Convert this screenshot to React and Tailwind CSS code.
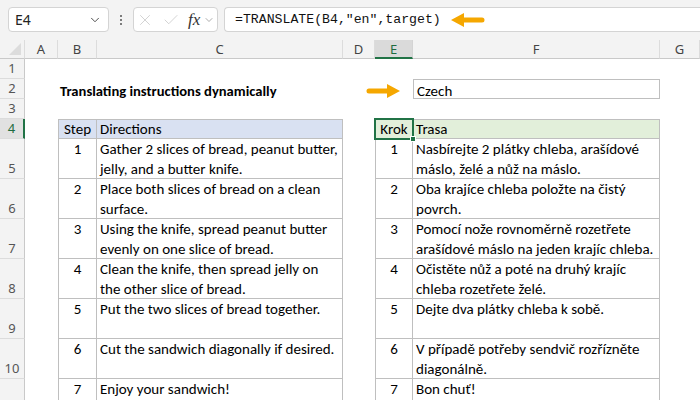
import { ChevronDown, X, Check } from 'lucide-react'

const cellFont = { fontFamily: 'Carlito, Calibri, Lato, sans-serif' }

const left = [
  ['Gather 2 slices of bread, peanut butter,', 'jelly, and a butter knife.'],
  ['Place both slices of bread on a clean', 'surface.'],
  ['Using the knife, spread peanut butter', 'evenly on one slice of bread.'],
  ['Clean the knife, then spread jelly on', 'the other slice of bread.'],
  ['Put the two slices of bread together.'],
  ['Cut the sandwich diagonally if desired.'],
  ['Enjoy your sandwich!'],
]

const right = [
  ['Nasbírejte 2 plátky chleba, arašídové', 'máslo, želé a nůž na máslo.'],
  ['Oba krajíce chleba položte na čistý', 'povrch.'],
  ['Pomocí nože rovnoměrně rozetřete', 'arašídové máslo na jeden krajíc chleba.'],
  ['Očistěte nůž a poté na druhý krajíc', 'chleba rozetřete želé.'],
  ['Dejte dva plátky chleba k sobě.'],
  ['V případě potřeby sendvič rozřízněte', 'diagonálně.'],
  ['Bon chuť!'],
]

function Arrow({ dir }) {
  return (
    <svg width="34" height="14" viewBox="0 0 34 14" className={dir === 'left' ? '' : 'rotate-180'}>
      <path d="M0 7 L13 0 L13 4.5 L31 4.5 Q33.5 4.5 33.5 7 Q33.5 9.5 31 9.5 L13 9.5 L13 14 Z" fill="#f5a700" />
    </svg>
  )
}

function RowHead({ n, active }) {
  return (
    <div
      className={`flex items-end justify-center text-[13px] leading-[19px] border-b border-[#dcdcdc] ${
        active ? 'bg-[#e1e1e1] text-[#1e6c41] border-r-2 border-r-[#217346]' : 'bg-[#f3f3f3] text-[#555] border-r border-r-[#c9c9c9]'
      }`}
      style={{ fontFamily: '"Noto Sans", sans-serif' }}
    >
      {n}
    </div>
  )
}

function Lines({ lines }) {
  return (
    <div className="flex flex-col leading-[20px]">
      {lines.map((l) => (
        <span key={l} className="whitespace-nowrap">{l}</span>
      ))}
    </div>
  )
}

export default function App() {
  const colLetters = ['A', 'B', 'C', 'D', 'E', 'F', 'G']
  return (
    <div className="w-[700px] h-[400px] overflow-hidden bg-white relative">
      {/* formula bar */}
      <div className="h-[40px] bg-[#f3f3f3] flex items-start pt-[7px] pl-[8px] gap-[6px]" style={{ fontFamily: '"Noto Sans", sans-serif' }}>
        <div className="w-[101px] h-[25px] bg-white border border-[#d4d4d4] rounded-[4px] flex items-center justify-between pl-[6px] pr-[6px] text-[14px] text-[#222]">
          <span>E4</span>
          <ChevronDown size={14} strokeWidth={1.6} color="#444" />
        </div>
        <div className="w-[12px] h-[25px] flex flex-col items-center justify-center gap-[2px]">
          <span className="w-[2px] h-[2px] bg-[#555] rounded-full" />
          <span className="w-[2px] h-[2px] bg-[#555] rounded-full" />
          <span className="w-[2px] h-[2px] bg-[#555] rounded-full" />
        </div>
        <div className="w-[85px] h-[25px] bg-white border border-[#d4d4d4] rounded-[4px] flex items-center pl-[2px] gap-[8px]">
          <X size={18} strokeWidth={1} color="#c4c4c4" />
          <Check size={18} strokeWidth={1} color="#c4c4c4" />
          <span className="italic text-[17px] text-[#333] leading-none" style={{ fontFamily: '"Liberation Serif", serif' }}>fx</span>
          <ChevronDown size={12} strokeWidth={1.4} color="#888" className="-ml-[5px]" />
        </div>
        <div className="flex-1 h-[25px] bg-white border border-[#d4d4d4] border-r-0 rounded-l-[4px] flex items-center pl-[10px] gap-[10px]">
          <span className="text-[13.2px] text-[#111]" style={{ fontFamily: '"Liberation Mono", monospace' }}>
            =TRANSLATE(B4,"en",target)
          </span>
          <Arrow dir="left" />
        </div>
      </div>

      {/* sheet */}
      <div
        className="grid grid-cols-[25px_33px_39px_246px_32px_38px_247px_40px] grid-rows-[19px_20px_20px_20px_20px_40px_40px_40px_40px_40px_40px_40px] text-[15px] leading-[20px] text-black"
        style={cellFont}
      >
        {/* column header row */}
        <div className="bg-[#f3f3f3] border-b border-[#c9c9c9] border-r border-r-[#dcdcdc] relative">
          <div className="absolute right-[3px] bottom-[3px] w-0 h-0 border-l-[12px] border-l-transparent border-b-[12px] border-b-[#dcdcdc]" />
        </div>
        {colLetters.map((l) => (
          <div
            key={l}
            className={`flex items-center justify-center text-[13px] ${
              l === 'E'
                ? 'bg-[#dadada] text-[#1e6c41] border-b-2 border-b-[#217346] border-r border-r-[#d4d4d4]'
                : 'bg-[#f3f3f3] text-[#444] border-b border-b-[#c9c9c9] border-r border-r-[#dcdcdc]'
            }`}
            style={{ fontFamily: '"Noto Sans", sans-serif' }}
          >
            {l}
          </div>
        ))}

        {/* row 1 */}
        <RowHead n={1} />
        <div className="col-span-7" />

        {/* row 2 */}
        <RowHead n={2} />
        <div />
        <div className="col-span-2 pt-[2px] pl-[2px] font-bold text-[14.6px] whitespace-nowrap">
          Translating instructions dynamically
        </div>
        <div className="col-span-2 flex items-center pt-[3px] justify-end pr-[13px] -ml-[20px]">
          <Arrow dir="right" />
        </div>
        <div className="border border-[#bfbfbf] pt-[1px] pl-[3px]">Czech</div>
        <div />

        {/* row 3 */}
        <RowHead n={3} />
        <div className="col-span-7" />

        {/* row 4 headers */}
        <RowHead n={4} active />
        <div />
        <div className="bg-[#d9e1f2] border border-[#bfbfbf] flex items-center justify-center">Step</div>
        <div className="bg-[#d9e1f2] border-t border-r border-b border-[#bfbfbf] flex items-center pl-[3px]">Directions</div>
        <div />
        <div className="bg-[#e2efda] border border-[#bfbfbf] flex items-center justify-center relative">
          Krok
          <div className="absolute -inset-[2px] border-2 border-[#217346]" />
          <div className="absolute -right-[4px] -bottom-[4px] w-[6px] h-[6px] bg-[#217346] border border-white" />
        </div>
        <div className="bg-[#e2efda] border-t border-r border-b border-[#bfbfbf] flex items-center pl-[3px]">Trasa</div>
        <div />

        {/* rows 5-11 (row 11 label falls below the window) */}
        {left.map((l, i) => (
          <Row key={i} n={i < 6 ? i + 5 : ''} step={i + 1} en={l} cz={right[i]} />
        ))}
      </div>
    </div>
  )
}

function Row({ n, step, en, cz }) {
  return (
    <>
      <RowHead n={n} />
      <div />
      <div className="border-l border-r border-b border-[#bfbfbf] flex justify-center">{step}</div>
      <div className="border-r border-b border-[#bfbfbf] pl-[3px]">
        <Lines lines={en} />
      </div>
      <div />
      <div className="border-l border-r border-b border-[#bfbfbf] flex justify-center">{step}</div>
      <div className="border-r border-b border-[#bfbfbf] pl-[3px]">
        <Lines lines={cz} />
      </div>
      <div />
    </>
  )
}
